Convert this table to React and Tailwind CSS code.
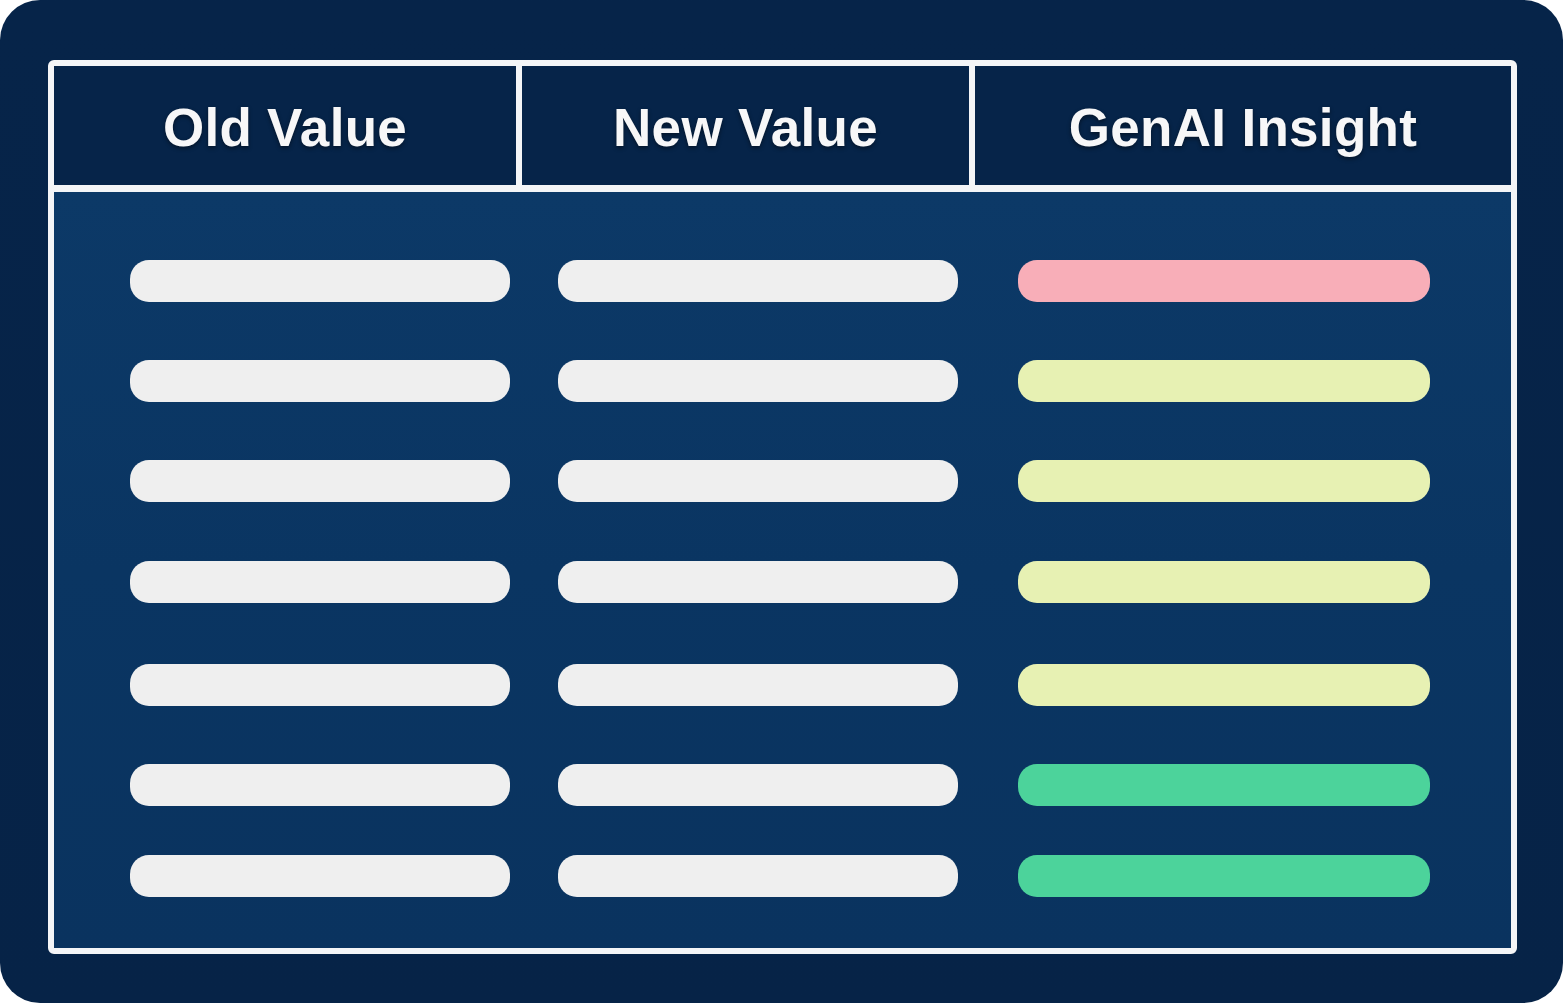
const rows = [
  { mt: "mt-0", insight: "bg-[#f8aeb8]" },
  { mt: "mt-[58px]", insight: "bg-[#e7f1b3]" },
  { mt: "mt-[58px]", insight: "bg-[#e7f1b3]" },
  { mt: "mt-[59px]", insight: "bg-[#e7f1b3]" },
  { mt: "mt-[61px]", insight: "bg-[#e7f1b3]" },
  { mt: "mt-[58px]", insight: "bg-[#4cd39b]" },
  { mt: "mt-[49px]", insight: "bg-[#4cd39b]" },
];

const headers = [
  { label: "Old Value", w: "w-[462px]" },
  { label: "New Value", w: "w-[453px]" },
  { label: "GenAI Insight", w: "w-[542px]" },
];

export default function App() {
  return (
    <div className="w-[1565px] h-[1005px] bg-white">
      <div className="w-[1563px] h-[1003px] rounded-[40px] bg-gradient-to-b from-[#062449] to-[#062347] pt-[60px] pl-[48px] font-['Liberation_Sans',Arial,sans-serif]">
        {/* table */}
        <div className="w-[1469px] h-[894px] border-[6px] border-[#f4f5f7] rounded-[6px] flex flex-col overflow-hidden">
          {/* header */}
          <div className="flex h-[126px] border-b-[7px] border-[#f4f5f7] bg-[#062449] shrink-0">
            {headers.map((h, i) => (
              <div
                key={h.label}
                className={`${h.w} flex items-center justify-center ${
                  i > 0 ? "border-l-[6px] border-[#f4f5f7]" : ""
                }`}
              >
                <span className="text-[53px] font-bold text-[#f7f7f8] leading-none pt-[4px] tracking-[0.3px] [text-shadow:0_2px_4px_rgba(0,0,0,0.45)]">
                  {h.label}
                </span>
              </div>
            ))}
          </div>

          {/* body */}
          <div className="flex-1 bg-gradient-to-b from-[#0c3967] via-[#0a3562] to-[#0a335f] pt-[68px] pl-[76px]">
            {rows.map((r, i) => (
              <div key={i} className={`flex ${r.mt}`}>
                <div className="w-[380px] h-[42px] rounded-[19px] bg-[#efefef]" />
                <div className="w-[400px] h-[42px] rounded-[19px] bg-[#efefef] ml-[48px]" />
                <div className={`w-[412px] h-[42px] rounded-[19px] ml-[60px] ${r.insight}`} />
              </div>
            ))}
          </div>
        </div>
      </div>
    </div>
  );
}
